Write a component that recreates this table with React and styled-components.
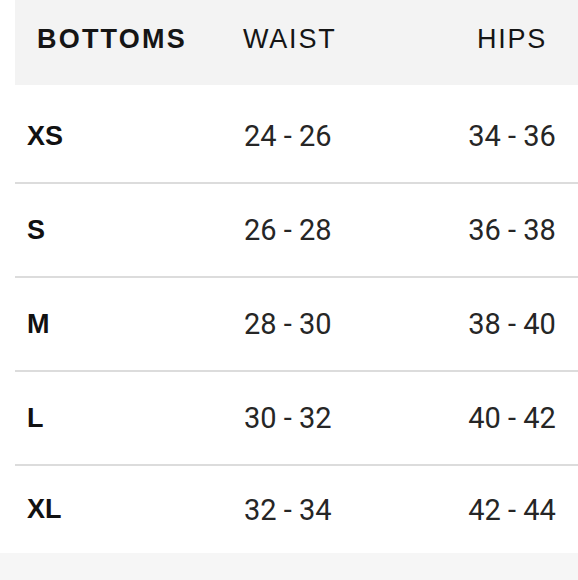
import React from 'react';
import styled, { createGlobalStyle } from 'styled-components';

const GlobalStyle = createGlobalStyle`
  html, body {
    margin: 0;
    padding: 0;
    background: #fff;
  }
  body {
    width: 578px;
    height: 580px;
    overflow: hidden;
  }
`;

const Page = styled.div`
  width: 578px;
  height: 580px;
  display: grid;
  grid-template-rows: auto 1fr;
  background: #fff;
`;

const Chart = styled.div`
  margin-left: 15px;
  display: flex;
  flex-direction: column;
`;

const HeaderRow = styled.div`
  display: grid;
  grid-template-columns: 228px 1fr 132px;
  align-items: center;
  height: 85px;
  padding-bottom: 6px;
  box-sizing: border-box;
  background: #f3f3f3;
  font-family: "Liberation Sans", Arial, sans-serif;
  font-size: 27px;
  color: #151515;
`;

const HeaderCell = styled.div`
  letter-spacing: ${props => props.strong ? '2.2px' : '1.8px'};
  font-weight: ${props => props.strong ? 700 : 400};
  padding-left: ${props => props.strong ? '22px' : '0'};
  text-align: ${props => props.center ? 'center' : 'left'};
`;

const Rows = styled.div`
  padding-top: 5px;
`;

const SizeRow = styled.div`
  display: grid;
  grid-template-columns: 228px 1fr 132px;
  align-items: center;
  height: ${props => props.last ? '87px' : '94px'};
  box-sizing: border-box;
  border-bottom: ${props => props.last ? 'none' : '2px solid #dcdcdc'};
`;

const SizeLabel = styled.div`
  padding-left: 12px;
  font-family: "Liberation Sans", Arial, sans-serif;
  font-weight: 700;
  font-size: 27px;
  color: #111;
`;

const Measure = styled.div`
  font-family: Roboto, "Liberation Sans", sans-serif;
  font-size: 29px;
  color: #262626;
  text-align: ${props => props.center ? 'center' : 'left'};
  padding-left: ${props => props.center ? '0' : '1px'};
`;

const BottomBand = styled.div`
  background: #f6f6f6;
`;

const sizes = [
  { size: 'XS', waist: '24 - 26', hips: '34 - 36' },
  { size: 'S', waist: '26 - 28', hips: '36 - 38' },
  { size: 'M', waist: '28 - 30', hips: '38 - 40' },
  { size: 'L', waist: '30 - 32', hips: '40 - 42' },
  { size: 'XL', waist: '32 - 34', hips: '42 - 44' },
];

export default function App() {
  return (
    <>
      <GlobalStyle />
      <Page>
        <Chart>
          <HeaderRow>
            <HeaderCell strong>BOTTOMS</HeaderCell>
            <HeaderCell>WAIST</HeaderCell>
            <HeaderCell center>HIPS</HeaderCell>
          </HeaderRow>
          <Rows>
            {sizes.map((row, index) => (
              <SizeRow key={row.size} last={index === sizes.length - 1}>
                <SizeLabel>{row.size}</SizeLabel>
                <Measure>{row.waist}</Measure>
                <Measure center>{row.hips}</Measure>
              </SizeRow>
            ))}
          </Rows>
        </Chart>
        <BottomBand />
      </Page>
    </>
  );
}
